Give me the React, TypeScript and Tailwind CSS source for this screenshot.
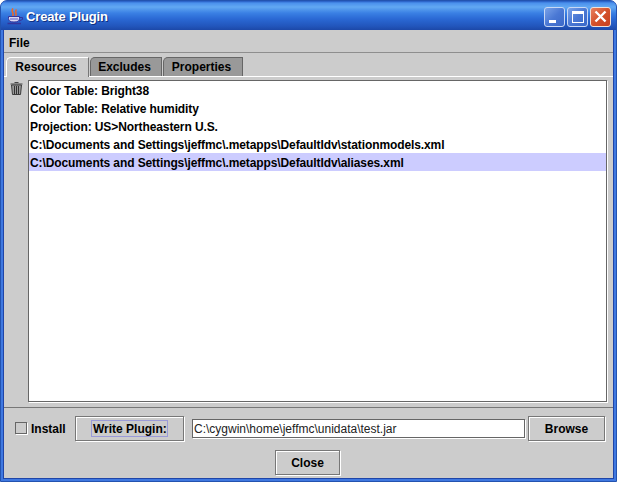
import React from 'react';

const rows = [
  'Color Table: Bright38',
  'Color Table: Relative humidity',
  'Projection: US>Northeastern U.S.',
  'C:\\Documents and Settings\\jeffmc\\.metapps\\DefaultIdv\\stationmodels.xml',
  'C:\\Documents and Settings\\jeffmc\\.metapps\\DefaultIdv\\aliases.xml',
];

function JavaIcon() {
  return (
    <svg width="16" height="17" viewBox="0 0 16 17" className="shrink-0">
      <path d="M6 0.5 C3 3.5 8 5 5.5 8 M9.5 1.5 C7 4 10.5 5.5 8.5 8" stroke="#e8682c" strokeWidth="1.6" fill="none" />
      <path d="M1.5 8.5 H12.5 V10.5 C12.5 13 10.5 14 7 14 C3.5 14 1.5 13 1.5 10.5 Z" fill="#d8d8f4" stroke="#34349c" />
      <path d="M12.5 9.5 H15.5 V11.5 L12 13" stroke="#34349c" fill="none" />
      <path d="M3 11 H11" stroke="#5c5cc0" />
      <path d="M0.5 15.5 H14" stroke="#34349c" strokeWidth="1.4" />
    </svg>
  );
}

function TrashIcon() {
  return (
    <svg width="13" height="13" viewBox="0 0 13 13">
      <path d="M4.5 0.5 H8.5 M0.5 2 H12.5" stroke="#444" strokeWidth="1.2" fill="none" />
      <path d="M1.5 3 H11.5 L10.5 12.5 H2.5 Z" fill="#9a9a9a" stroke="#3c3c3c" />
      <path d="M4.5 4 V12 M6.5 4 V12 M8.5 4 V12" stroke="#333" />
    </svg>
  );
}

function WinButton({ children, close }: { children: React.ReactNode; close?: boolean }) {
  return (
    <div
      className={
        close
          ? 'flex h-[20px] w-[21px] items-center justify-center rounded-[3px] border border-[#f0e0d8] bg-gradient-to-br from-[#e8805e] via-[#d4512a] to-[#c8401e]'
          : 'flex h-[20px] w-[21px] items-center justify-center rounded-[3px] border border-[#c8d8f4] bg-gradient-to-br from-[#7aa2e8] via-[#4a78d4] to-[#3a68c8]'
      }
    >
      {children}
    </div>
  );
}

function Tab({ label, active }: { label: string; active?: boolean }) {
  return (
    <div
      className={
        active
          ? 'relative z-10 -mb-px flex h-[20px] w-[83px] items-center justify-center rounded-tl-[5px] border-t border-l border-r border-t-white border-l-white border-r-[#777] bg-[#cccccc] pr-[3px] pb-[2px]'
          : 'flex h-[19px] items-center justify-center rounded-tl-[5px] border-t border-l border-r border-[#666] bg-[#999999] pr-[3px]'
      }
    >
      {label}
    </div>
  );
}

function EtchedButton({ className, children }: { className: string; children: React.ReactNode }) {
  return (
    <div className={`flex items-center justify-center border border-[#777] bg-[#cccccc] shadow-[1px_1px_0_#fff,inset_1px_1px_0_#fff] ${className}`}>
      {children}
    </div>
  );
}

export default function App() {
  return (
    <div className="flex h-[482px] w-[617px] flex-col overflow-hidden rounded-t-[7px] border border-[#2353b0] bg-[#3f78e0] font-['Liberation_Sans',Arial,sans-serif] text-[12px] font-bold text-black">
      <div className="flex h-[29px] shrink-0 items-center justify-between bg-[linear-gradient(to_bottom,#2458c0_0px,#4a90ec_2px,#62a8f2_6px,#3a80e4_12px,#2a68d4_18px,#2256bc_25px,#1c48a8_29px)] pt-[2px] pl-[6px] pr-[5px]">
        <div className="flex items-center gap-[3px]">
          <JavaIcon />
          <span className="text-[13px] tracking-[-0.15px] text-white [text-shadow:1px_1px_0_#0f2f80]">Create Plugin</span>
        </div>
        <div className="flex items-center gap-[2px]">
          <WinButton>
            <div className="mt-[9px] mr-[5px] h-[3px] w-[7px] bg-white" />
          </WinButton>
          <WinButton>
            <div className="h-[12px] w-[12px] border border-t-[3px] border-white" />
          </WinButton>
          <WinButton close>
            <svg width="13" height="13" viewBox="0 0 13 13">
              <path d="M1.5 1.5 L11.5 11.5 M11.5 1.5 L1.5 11.5" stroke="white" strokeWidth="2.4" />
            </svg>
          </WinButton>
        </div>
      </div>

      <div className="mx-[2px] mb-[2px] flex min-h-0 flex-1 flex-col border-x border-b border-[#1f45a8] bg-[#cccccc]">
        <div className="flex h-[23px] shrink-0 items-center border-b border-[#8e8e8e] pt-[3px] pl-[5px]">File</div>

        <div className="flex h-[23px] shrink-0 items-end gap-px pl-[2px]">
          <Tab label="Resources" active />
          <div className="w-[72px]">
            <Tab label="Excludes" />
          </div>
          <div className="w-[80px]">
            <Tab label="Properties" />
          </div>
        </div>

        <div className="flex h-[332px] shrink-0 gap-[2px] border-t border-b border-t-white border-b-[#777] pt-[3px] pl-[5px] pr-[6px] pb-[5px]">
          <div className="w-[17px] shrink-0 pt-[2px] pl-px">
            <TrashIcon />
          </div>
          <div className="flex-1 border border-[#666] bg-white tracking-[-0.1px] shadow-[1px_1px_0_#fff]">
            {rows.map((row, i) => (
              <div key={row} className={i === 4 ? 'flex h-[18px] items-center bg-[#ccccff] pt-px pl-px' : 'flex h-[18px] items-center pt-px pl-px'}>
                {row}
              </div>
            ))}
          </div>
        </div>

        <div className="flex h-[33px] shrink-0 items-center pt-[7px] pl-[11px] pr-[8px]">
          <div className="h-[12px] w-[12px] border border-[#666] bg-[#cccccc] shadow-[1px_1px_0_#fff]" />
          <span className="ml-[4px] w-[44px] pt-px">Install</span>
          <EtchedButton className="h-[25px] w-[109px]">
            <span className="flex h-[17px] w-[77px] items-center border border-[#9a9ad8] pt-px pl-px">Write Plugin:</span>
          </EtchedButton>
          <div className="ml-[8px] flex h-[19px] w-[333px] items-center border border-[#666] bg-white pt-px pl-px font-normal text-[#222] shadow-[1px_1px_0_#fff]">
            {'C:\\cygwin\\home\\jeffmc\\unidata\\test.jar'}
          </div>
          <EtchedButton className="ml-[3px] h-[25px] w-[77px] pt-px">Browse</EtchedButton>
        </div>

        <div className="flex flex-1 items-start justify-center pt-[9px] pr-[2px]">
          <EtchedButton className="h-[25px] w-[65px]">Close</EtchedButton>
        </div>
      </div>
    </div>
  );
}
